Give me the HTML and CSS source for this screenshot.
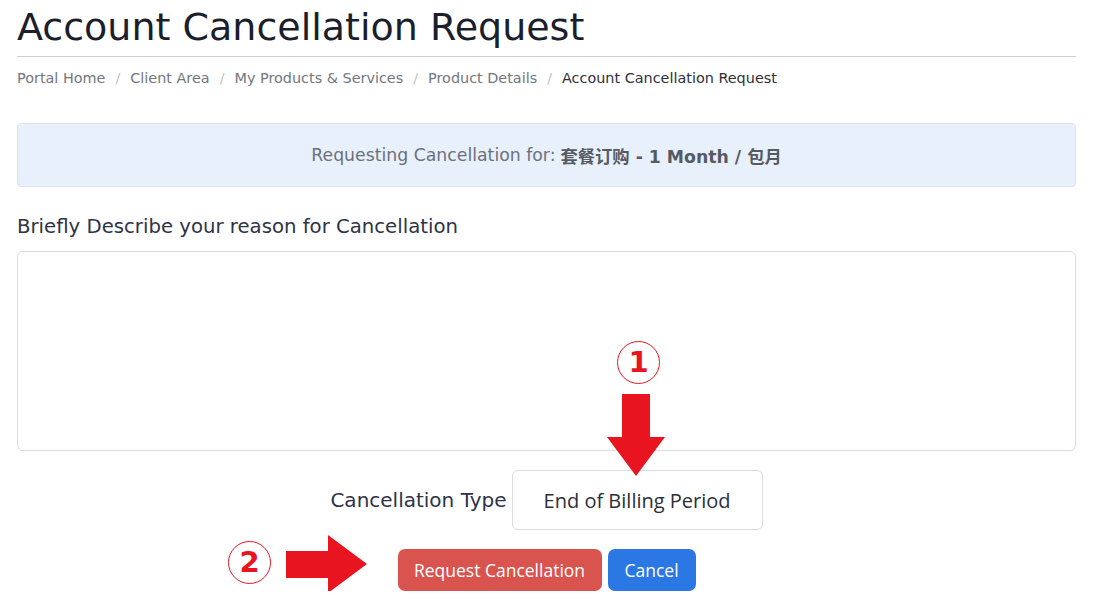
FILE: index.html
```html
<!DOCTYPE html>
<html lang="en">
<head>
  <meta charset="UTF-8" />
  <title>Account Cancellation Request</title>
  <link rel="stylesheet" href="styles.css">
</head>
<body>
  <div class="page">
    <div class="header">
      <h1>Account Cancellation Request</h1>
    </div>
    <ol class="crumbs">
      <li><a href="#">Portal Home</a></li>
      <li><a href="#">Client Area</a></li>
      <li><a href="#">My Products &amp; Services</a></li>
      <li><a href="#">Product Details</a></li>
      <li class="active">Account Cancellation Request</li>
    </ol>

    <div class="alert">
      Requesting Cancellation for: <strong>套餐订购 - 1 Month / 包月</strong>
    </div>

    <form class="cancel-form">
      <label class="reason-label" for="reason">Briefly Describe your reason for Cancellation</label>
      <textarea id="reason" class="reason"></textarea>

      <div class="type-row">
        <label for="type">Cancellation Type</label>
        <select id="type" class="type-select">
          <option>End of Billing Period</option>
          <option>Immediate</option>
        </select>
      </div>

      <div class="actions">
        <button type="submit" class="btn btn-danger">Request Cancellation</button>
        <button type="button" class="btn btn-primary">Cancel</button>
      </div>
    </form>

    <!-- annotation marks drawn over the page -->
    <div class="mark mark-one">1</div>
    <svg class="arrow arrow-down" width="60" height="84" viewBox="0 0 60 84">
      <polygon points="15,0 43,0 43,43 58,43 29,82 0,43 15,43" fill="#e8141f"/>
    </svg>
    <div class="mark mark-two">2</div>
    <svg class="arrow arrow-right" width="84" height="60" viewBox="0 0 84 60">
      <polygon points="0,16 42,16 42,0 81,29 42,58 42,43 0,43" fill="#e8141f"/>
    </svg>
  </div>
</body>
</html>
```

FILE: styles.css
```css
* {
  box-sizing: border-box;
}
body {
  margin: 0;
  background: #fff;
  font-family: 'DejaVu Sans', sans-serif;
  color: #333;
}
.page {
  position: relative;
  width: 1059px;
  margin-left: 17px;
}
.header {
  border-bottom: 1px solid #cfcfcf;
  padding: 5px 0 7px;
}
h1 {
  margin: 0;
  font-weight: 400;
  font-size: 38px;
  line-height: 44px;
  color: #1b1e2b;
}
.crumbs {
  list-style: none;
  display: flex;
  margin: 0;
  padding: 11px 0 0;
  font-size: 14.4px;
  line-height: 20px;
}
.crumbs li + li::before {
  content: "/";
  color: #c4c4c4;
  padding: 0 10px;
}
.crumbs a {
  color: #73767e;
  text-decoration: none;
}
.crumbs .active {
  color: #2e3038;
}
.alert {
  margin-top: 35px;
  height: 64px;
  background: #e8f0fc;
  border: 1px solid #dbe3ee;
  border-radius: 4px;
  display: flex;
  align-items: center;
  justify-content: center;
  font-size: 17.3px;
  color: #6b717c;
}
.alert strong {
  font-family: 'DejaVu Sans', 'Noto Sans CJK SC', sans-serif;
  font-weight: 700;
  color: #555a63;
  margin-left: 5px;
}
.cancel-form {
  display: flex;
  flex-direction: column;
}
.reason-label {
  margin-top: 26px;
  font-size: 19.7px;
  line-height: 28px;
  color: #2e3347;
}
.reason {
  margin-top: 10px;
  height: 200px;
  border: 1px solid #dcdcdc;
  border-radius: 6px;
  resize: none;
  font: inherit;
}
.type-row {
  margin-top: 19px;
  display: flex;
  justify-content: center;
  align-items: center;
  gap: 5px;
}
.type-row label {
  font-size: 20px;
  color: #2e3347;
}
.type-select {
  appearance: none;
  width: 251px;
  height: 60px;
  border: 1px solid #dcdcdc;
  border-radius: 6px;
  background: #fff;
  font-family: 'Open Sans', sans-serif;
  font-size: 20px;
  color: #2b2f3a;
  text-align: center;
  text-align-last: center;
}
.actions {
  margin-top: 19px;
  display: flex;
  justify-content: center;
  gap: 6px;
}
.btn {
  height: 42px;
  border: none;
  border-radius: 7px;
  padding: 0 10px;
  font-family: 'Open Sans', sans-serif;
  font-size: 17.5px;
  color: #fff;
  cursor: pointer;
}
.btn-danger {
  width: 204px;
  background: #d9534f;
}
.btn-primary {
  width: 88px;
  background: #2b78e4;
}
.mark {
  position: absolute;
  width: 43px;
  height: 43px;
  border: 1.5px solid #e8141f;
  border-radius: 50%;
  color: #e8141f;
  font-weight: 700;
  font-size: 29px;
  line-height: 40px;
  text-align: center;
  background: #fff;
}
.mark-one {
  left: 600px;
  top: 341px;
}
.mark-two {
  left: 211px;
  top: 541px;
}
.arrow {
  position: absolute;
}
.arrow-down {
  left: 590px;
  top: 394px;
}
.arrow-right {
  left: 269px;
  top: 535px;
}
```
